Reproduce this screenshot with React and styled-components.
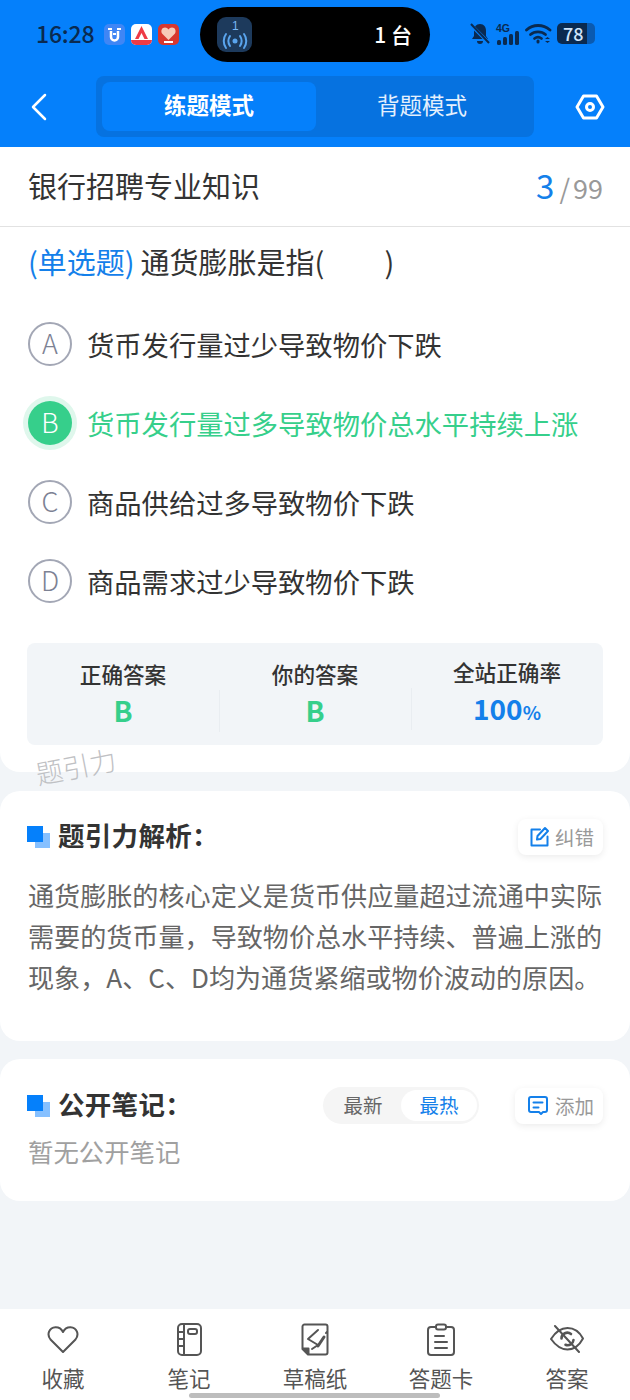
import React from 'react';
import styled, { createGlobalStyle } from 'styled-components';

const GlobalStyle = createGlobalStyle`
  html, body { margin: 0; padding: 0; background: #f2f5f8; }
  body { font-family: "Noto Sans CJK SC", "Noto Sans", sans-serif; }
  * { box-sizing: border-box; }
`;

const Page = styled.div`
  position: relative;
  width: 630px;
  height: 1400px;
  display: flex;
  flex-direction: column;
  overflow: hidden;
  background: #f2f5f8;
`;

const Header = styled.header`
  background: #0580fb;
  height: 147px;
  padding-top: 7px;
`;

const StatusBar = styled.div`
  display: flex;
  align-items: center;
  height: 55px;
  padding-left: 36px;
`;

const Time = styled.span`
  width: 68px;
  padding-bottom: 3px;
  font-size: 23px;
  font-weight: 500;
  color: #0a2a50;
  letter-spacing: -0.2px;
`;

const AppIcons = styled.div`
  display: flex;
  gap: 6px;
  width: 96px;
  align-items: center;
  padding-bottom: 1px;
`;

const Island = styled.div`
  width: 230px;
  height: 55px;
  background: #000;
  border-radius: 28px;
  display: flex;
  align-items: center;
  justify-content: space-between;
  padding: 0 18px 2px 17px;
  color: #fff;
  font-size: 21px;
  font-weight: 500;
`;

const IslandBadge = styled.div`
  width: 35px;
  height: 35px;
  margin-top: 2px;
  border-radius: 9px;
  background: #1d3a5c;
  display: flex;
  align-items: center;
  justify-content: center;
`;

const StatusIcons = styled.div`
  display: flex;
  align-items: center;
  margin-left: 40px;
  padding-bottom: 2px;
  gap: 5px;
`;

const Battery = styled.div`
  width: 38px;
  height: 21px;
  border-radius: 5px;
  background: linear-gradient(90deg, #0a2a50 0 78%, #0a5ab0 78% 100%);
  color: #cfe4fb;
  font-size: 18px;
  font-weight: 500;
  line-height: 20px;
  padding-left: 6px;
`;

const NavBar = styled.nav`
  display: flex;
  align-items: center;
  margin-top: 14px;
  height: 61px;
  padding: 0 25px 0 30px;
`;

const NavSide = styled.div`
  width: 66px;
  display: flex;
  align-items: center;
`;

const ModeTabs = styled.div`
  width: 438px;
  height: 61px;
  padding: 6px;
  border-radius: 8px;
  background: #0672e0;
  display: flex;
`;

const ModeTab = styled.div`
  flex: ${p => (p.$active ? '0 0 214px' : '1')};
  border-radius: 8px;
  background: ${p => (p.$active ? '#0580fb' : 'transparent')};
  color: ${p => (p.$active ? '#fff' : '#e4f0fd')};
  font-size: 22.500px;
  font-weight: ${p => (p.$active ? 700 : 400)};
  padding-bottom: 5px;
  display: flex;
  align-items: center;
  justify-content: center;
`;

const GearSlot = styled.div`
  margin-left: 41px;
  display: flex;
`;

const QuestionCard = styled.section`
  position: relative;
  height: 625px;
  background: #fff;
  border-radius: 0 0 20px 20px;
`;

const TitleRow = styled.div`
  height: 80px;
  padding: 0 27px 4px 28px;
  border-bottom: 1px solid #e2e2e2;
  display: flex;
  align-items: center;
  justify-content: space-between;
`;

const BankTitle = styled.h1`
  margin: 0;
  font-size: 29px;
  font-weight: 400;
  color: #333;
`;

const Counter = styled.div`
  display: flex;
  align-items: baseline;
  color: #999;
  font-size: 27px;
`;

const CounterNow = styled.span`
  color: #1480ea;
  font-size: 33px;
  margin-right: 5px;
`;

const CounterSlash = styled.span`
  margin-right: 3px;
`;

const Question = styled.p`
  margin: 15px 0 0 28px;
  height: 40px;
  font-size: 29px;
  line-height: 38px;
  color: #333;
  white-space: pre;
`;

const QuestionType = styled.span`
  color: #1480ea;
  margin-right: 6px;
`;

const BlankGap = styled.span`
  display: inline-block;
  width: 60px;
`;

const Options = styled.div`
  margin-top: 40px;
  display: flex;
  flex-direction: column;
  gap: 35px;
  padding-left: 28px;
`;

const Option = styled.div`
  height: 44px;
  display: flex;
  align-items: center;
  gap: 15px;
  font-size: 27.300px;
  color: ${p => (p.$correct ? '#36cf8b' : '#333')};
`;

const OptionMark = styled.span`
  width: 44px;
  height: 44px;
  flex: none;
  border-radius: 50%;
  padding-bottom: 3px;
  display: flex;
  align-items: center;
  justify-content: center;
  font-size: 27px;
  font-weight: 300;
  color: ${p => (p.$correct ? '#fff' : '#7d8294')};
  background: ${p => (p.$correct ? '#36cf8b' : '#fff')};
  border: ${p => (p.$correct ? 'none' : '2px solid #a3a7b5')};
  box-shadow: ${p => (p.$correct ? '0 0 0 5px #dff7ec' : 'none')};
`;

const StatsBox = styled.div`
  margin: 40px 27px 0;
  height: 102px;
  border-radius: 8px;
  background: #f2f5f8;
  display: grid;
  grid-template-columns: repeat(3, 1fr);
  align-items: center;
`;

const Stat = styled.div`
  position: relative;
  display: flex;
  flex-direction: column;
  align-items: center;
  gap: 2px;

  &::before {
    content: '';
    display: ${p => (p.$first ? 'none' : 'block')};
    position: absolute;
    left: 0;
    top: 31px;
    width: 1px;
    height: 42px;
    background: #e9edf1;
  }
`;

const StatLabel = styled.div`
  font-size: 21.600px;
  line-height: 30px;
  font-weight: 500;
  color: #333;
`;

const StatValue = styled.div`
  font-size: 28px;
  line-height: 38px;
  font-weight: 700;
  color: ${p => p.$color};
`;

const Percent = styled.span`
  font-size: 19px;
`;

const Watermark = styled.div`
  position: absolute;
  left: 36px;
  top: 607px;
  font-size: 27px;
  font-weight: 300;
  color: #bfc1c4;
  transform: rotate(-11deg);
  transform-origin: left center;
  z-index: 2;
  white-space: nowrap;
`;

const Card = styled.section`
  background: #fff;
  border-radius: 20px;
  margin-top: ${p => p.$top}px;
  height: ${p => p.$height}px;
  padding: 0 27px;
`;

const SectionHead = styled.div`
  display: flex;
  align-items: center;
  height: 37px;
  margin-top: ${p => p.$top}px;
`;

const SectionTitle = styled.h2`
  margin: 0 0 0 8px;
  padding-bottom: 4px;
  font-size: 26.500px;
  font-weight: 700;
  color: #333;
  letter-spacing: 0.300px;
  flex: 1;
`;

const ChipButton = styled.div`
  display: flex;
  align-items: center;
  gap: ${p => (p.$wide ? 7 : 5)}px;
  height: 36px;
  padding: 0 9px 0 ${p => (p.$wide ? 13 : 12)}px;
  border-radius: 8px;
  background: #fff;
  box-shadow: 0 2px 7px rgba(0, 0, 0, 0.08);
  color: #999;
  font-size: 19.500px;
`;

const Analysis = styled.p`
  margin: 20px 0 0 1px;
  font-size: 26.100px;
  line-height: 41px;
  color: #666;
`;

const SortToggle = styled.div`
  display: flex;
  align-items: center;
  height: 37px;
  padding: 0 2px;
  margin-right: 36px;
  border-radius: 19px;
  background: #f5f5f5;
  font-size: 19.500px;
  color: #666;
`;

const SortItem = styled.span`
  height: 31px;
  width: 76px;
  padding-bottom: 2px;
  display: flex;
  align-items: center;
  justify-content: center;
  border-radius: 16px;
  background: ${p => (p.$active ? '#fff' : 'transparent')};
  color: ${p => (p.$active ? '#1480ea' : '#666')};
`;

const EmptyNote = styled.p`
  margin: 9px 0 0 1px;
  font-size: 25.400px;
  line-height: 36px;
  color: #a0a0a0;
`;

const BottomBar = styled.footer`
  margin-top: auto;
  height: 91px;
  background: #fff;
  display: grid;
  grid-template-columns: repeat(5, 126px);
  padding-top: 13px;
`;

const BarItem = styled.div`
  display: flex;
  flex-direction: column;
  align-items: center;
  font-size: 21.500px;
  line-height: 30px;
  color: #555;
  gap: 7px;
  min-width: 0;
`;

const BarIcon = styled.div`
  height: 34px;
  display: flex;
  align-items: center;
  justify-content: center;
`;

const HomeIndicator = styled.div`
  position: absolute;
  left: 189px;
  bottom: 2px;
  width: 251px;
  height: 5px;
  border-radius: 3px;
  background: #bdbdbd;
`;

const SquaresIcon = () => (
  <svg width="23" height="22" viewBox="0 0 23 22">
    <rect x="8" y="7" width="15" height="15" fill="#86c0ff" />
    <rect width="16" height="16" fill="#0580fb" />
  </svg>
);

const IconStroke = { fill: 'none', stroke: '#555', strokeWidth: 2, strokeLinecap: 'round', strokeLinejoin: 'round' };

const HeartIcon = () => (
  <svg width="32" height="27" viewBox="0 0 32 27" {...IconStroke}>
    <path d="M16 26 3.500 13.500C-.5 8.500 2 1.500 8.500 1.200c3.300-.1 6 1.700 7.500 4.800 1.500-3.100 4.200-4.900 7.500-4.800C30 1.500 32.500 8.500 28.500 13.500z" />
  </svg>
);

const NotebookIcon = () => (
  <svg width="25" height="33" viewBox="0 0 25 33" {...IconStroke}>
    <rect x="1" y="1" width="23" height="31" rx="4" />
    <path d="M7 1v31M1 9h6M1 16h6M1 23h6" />
    <rect x="11" y="6" width="9" height="5" rx="2" />
  </svg>
);

const DraftIcon = () => (
  <svg width="28" height="33" viewBox="0 0 28 33" {...IconStroke}>
    <path d="M7 31.500h17.500a2 2 0 0 0 2-2v-26a2 2 0 0 0-2-2h-21a2 2 0 0 0-2 2V26z" />
    <path d="M2 25.500h5.500V31z" fill="#555" />
    <path d="M17 7 7 16l10 6-6 4" />
    <path d="m17 23 6-9" strokeWidth="3" />
    <path d="m25 10 1-1" />
  </svg>
);

const SheetIcon = () => (
  <svg width="28" height="33" viewBox="0 0 28 33" {...IconStroke}>
    <path d="M8 4H4a3 3 0 0 0-3 3v22a3 3 0 0 0 3 3h20a3 3 0 0 0 3-3V7a3 3 0 0 0-3-3h-4" />
    <rect x="9" y="1.500" width="10" height="5" rx="2" />
    <path d="M8 13h9M8 19h12M8 25h12" />
  </svg>
);

const EyeOffIcon = () => (
  <svg width="34" height="28" viewBox="0 0 34 28" {...IconStroke}>
    <path d="M1 14C6 6 11 3 17.500 3S29 6 33 13.500C29 21 24 24.500 17.500 24.500S6 21 1 14z" />
    <path d="M11.500 13.500a5.800 5.800 0 0 1 9.500-4.500M23.500 15a5.800 5.800 0 0 1-8 4.800" strokeWidth="2.600" />
    <path d="M5 1l24 26" />
  </svg>
);

const EditIcon = () => (
  <svg width="20" height="21" viewBox="0 0 20 21" fill="none" stroke="#1480ea" strokeWidth="2" strokeLinecap="round" strokeLinejoin="round">
    <path d="M10 3.500H1.500V19.500H17.500V10.500" />
    <path d="M7.500 10 15 2l3 3-7.500 8-3.500.5z" />
  </svg>
);

const CommentIcon = () => (
  <svg width="20" height="21" viewBox="0 0 20 21" fill="none" stroke="#1480ea" strokeWidth="2" strokeLinecap="round" strokeLinejoin="round">
    <path d="M3 2h14a2 2 0 0 1 2 2v11a2 2 0 0 1-2 2h-2l-2 2-2-2H3a2 2 0 0 1-2-2V4a2 2 0 0 1 2-2z" />
    <path d="M5.500 7.500h9M5.500 12.500h5" />
  </svg>
);

const BellOffIcon = () => (
  <svg width="20" height="22" viewBox="0 0 20 22" fill="#0a2a50">
    <path d="M10 1c4 0 6 3 6 7v5l2 3H2l2-3V8c0-4 2-7 6-7z" />
    <path d="M7 18h6a3 3 0 0 1-6 0z" />
    <path d="M1 2l18 18" stroke="#0580fb" strokeWidth="3.500" />
    <path d="M1 1l18 19" stroke="#0a2a50" strokeWidth="2" />
  </svg>
);

const SignalIcon = () => (
  <svg width="25" height="22" viewBox="0 0 25 22" fill="#0a2a50">
    <text x="1" y="9" fontSize="10.500" fontWeight="700" fontFamily="Liberation Sans">4G</text>
    <rect x="2" y="17" width="4" height="5" rx="1.500" />
    <rect x="8" y="14" width="4" height="8" rx="1.500" />
    <rect x="14" y="11" width="4" height="11" rx="1.500" />
    <rect x="20" y="8" width="4" height="14" rx="1.500" />
  </svg>
);

const WifiIcon = () => (
  <svg width="27" height="21" viewBox="0 0 27 21" fill="none" stroke="#0a2a50" strokeWidth="2.800" strokeLinecap="round">
    <path d="M1.500 7C8 1 18 1 25 7" />
    <path d="M5.500 11.500c4-3.500 11-3.500 15 0" />
    <path d="M9.500 15.500c2-1.500 5-1.500 7 0" />
    <path d="M13 18v1" strokeWidth="3" />
    <path d="m20 16 2.500-2 2.500 2zM20 18l2.500 2 2.500-2z" fill="#0a2a50" stroke="none" />
  </svg>
);

const LiveIcon = () => (
  <svg width="28" height="32" viewBox="0 0 28 32" fill="none" stroke="#5aa5ee" strokeWidth="2" strokeLinecap="round">
    <text x="11" y="11" fontSize="12" fill="#7ab8f5" stroke="none" fontFamily="Liberation Sans">1</text>
    <circle cx="14" cy="22" r="2.500" fill="#5aa5ee" stroke="none" />
    <path d="M9 17c-2 3-2 7 0 10M19 17c2 3 2 7 0 10M5 15c-3 4-3 10 0 14M23 15c3 4 3 10 0 14" />
  </svg>
);

const TileApp = styled.svg`
  width: 21px;
  height: 21px;
  border-radius: 5px;
  display: block;
`;

const App = () => (
  <Page>
    <GlobalStyle />
    <Header>
      <StatusBar>
        <Time>16:28</Time>
        <AppIcons>
          <TileApp viewBox="0 0 21 21">
            <rect width="21" height="21" fill="#3f86f5" />
            <path d="M7 7v6a3.500 3.500 0 0 0 7 0V7" fill="none" stroke="#fff" strokeWidth="2.500" />
            <path d="M4 5h4M13 5h4M9 10h3" stroke="#fff" strokeWidth="2" />
          </TileApp>
          <TileApp viewBox="0 0 21 21">
            <rect width="21" height="21" fill="#fff" />
            <path d="M10.500 2 4 15h3.500l3-6 3 6H17z" fill="#ee3b46" />
            <rect y="16" width="21" height="5" fill="#ee3b46" />
          </TileApp>
          <TileApp viewBox="0 0 21 21">
            <rect width="21" height="21" fill="#d8372f" />
            <path d="M10.500 16 4 9.500C2.500 6.500 4 3.500 7 3.500c1.500 0 2.700.8 3.500 2 .8-1.200 2-2 3.500-2 3 0 4.500 3 3 6z" fill="#f7c9b8" />
            <rect x="6" y="17" width="9" height="2" fill="#fff" />
          </TileApp>
        </AppIcons>
        <Island>
          <IslandBadge><LiveIcon /></IslandBadge>
          <span>1 台</span>
        </Island>
        <StatusIcons>
          <BellOffIcon />
          <SignalIcon />
          <WifiIcon />
          <Battery>78</Battery>
        </StatusIcons>
      </StatusBar>
      <NavBar>
        <NavSide>
          <svg width="17" height="28" viewBox="0 0 17 28" fill="none" stroke="#fff" strokeWidth="2.500" strokeLinecap="round" strokeLinejoin="round">
            <path d="M15 2 3 14l12 12" />
          </svg>
        </NavSide>
        <ModeTabs>
          <ModeTab $active>练题模式</ModeTab>
          <ModeTab>背题模式</ModeTab>
        </ModeTabs>
        <GearSlot>
          <svg width="30" height="26" viewBox="0 0 30 26" fill="none" stroke="#fff" strokeWidth="3" strokeLinejoin="round">
            <path d="M8.500 2h13L28 13l-6.500 11h-13L2 13z" />
            <circle cx="15" cy="13" r="3.500" />
          </svg>
        </GearSlot>
      </NavBar>
    </Header>

    <QuestionCard>
      <TitleRow>
        <BankTitle>银行招聘专业知识</BankTitle>
        <Counter><CounterNow>3</CounterNow><CounterSlash>/</CounterSlash>99</Counter>
      </TitleRow>
      <Question><QuestionType>(单选题)</QuestionType>通货膨胀是指(<BlankGap />)</Question>
      <Options>
        <Option><OptionMark>A</OptionMark>货币发行量过少导致物价下跌</Option>
        <Option $correct><OptionMark $correct>B</OptionMark>货币发行量过多导致物价总水平持续上涨</Option>
        <Option><OptionMark>C</OptionMark>商品供给过多导致物价下跌</Option>
        <Option><OptionMark>D</OptionMark>商品需求过少导致物价下跌</Option>
      </Options>
      <StatsBox>
        <Stat $first><StatLabel>正确答案</StatLabel><StatValue $color="#36cf8b">B</StatValue></Stat>
        <Stat><StatLabel>你的答案</StatLabel><StatValue $color="#36cf8b">B</StatValue></Stat>
        <Stat><StatLabel>全站正确率</StatLabel><StatValue $color="#1480ea">100<Percent>%</Percent></StatValue></Stat>
      </StatsBox>
      <Watermark>题引力</Watermark>
    </QuestionCard>

    <Card $top={19} $height={250}>
      <SectionHead $top={27}>
        <SquaresIcon />
        <SectionTitle>题引力解析：</SectionTitle>
        <ChipButton><EditIcon />纠错</ChipButton>
      </SectionHead>
      <Analysis>通货膨胀的核心定义是货币供应量超过流通中实际需要的货币量，导致物价总水平持续、普遍上涨的现象，A、C、D均为通货紧缩或物价波动的原因。</Analysis>
    </Card>

    <Card $top={18} $height={142}>
      <SectionHead $top={28}>
        <SquaresIcon />
        <SectionTitle>公开笔记：</SectionTitle>
        <SortToggle>
          <SortItem>最新</SortItem>
          <SortItem $active>最热</SortItem>
        </SortToggle>
        <ChipButton $wide><CommentIcon />添加</ChipButton>
      </SectionHead>
      <EmptyNote>暂无公开笔记</EmptyNote>
    </Card>

    <BottomBar>
      <BarItem><BarIcon><HeartIcon /></BarIcon>收藏</BarItem>
      <BarItem><BarIcon><NotebookIcon /></BarIcon>笔记</BarItem>
      <BarItem><BarIcon><DraftIcon /></BarIcon>草稿纸</BarItem>
      <BarItem><BarIcon><SheetIcon /></BarIcon>答题卡</BarItem>
      <BarItem><BarIcon><EyeOffIcon /></BarIcon>答案</BarItem>
    </BottomBar>
    <HomeIndicator />
  </Page>
);

export default App;
